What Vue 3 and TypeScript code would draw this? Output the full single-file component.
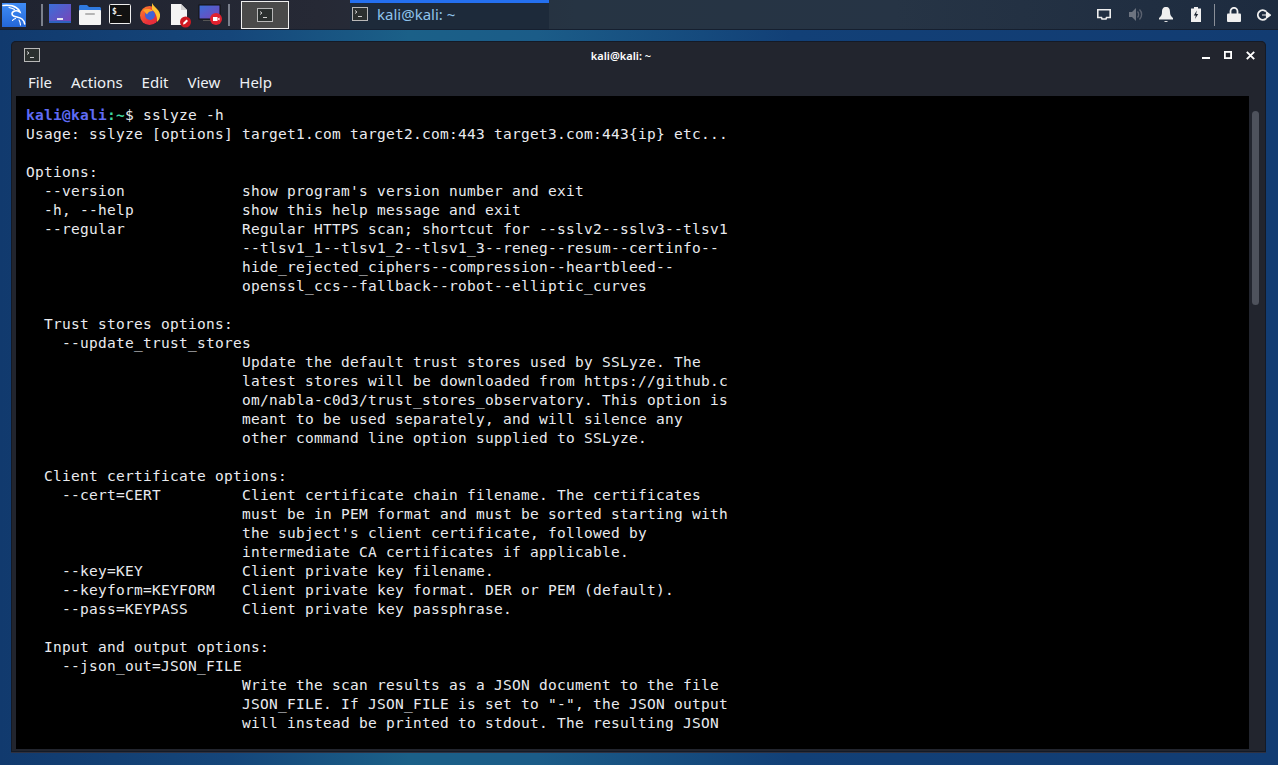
<script setup lang="ts">
type Seg = { t: string; c?: string }
const body: string[] = [
"Usage: sslyze [options] target1.com target2.com:443 target3.com:443{ip} etc...",
"",
"Options:",
"  --version             show program's version number and exit",
"  -h, --help            show this help message and exit",
"  --regular             Regular HTTPS scan; shortcut for --sslv2--sslv3--tlsv1",
"                        --tlsv1_1--tlsv1_2--tlsv1_3--reneg--resum--certinfo--",
"                        hide_rejected_ciphers--compression--heartbleed--",
"                        openssl_ccs--fallback--robot--elliptic_curves",
"",
"  Trust stores options:",
"    --update_trust_stores",
"                        Update the default trust stores used by SSLyze. The",
"                        latest stores will be downloaded from https://github.c",
"                        om/nabla-c0d3/trust_stores_observatory. This option is",
"                        meant to be used separately, and will silence any",
"                        other command line option supplied to SSLyze.",
"",
"  Client certificate options:",
"    --cert=CERT         Client certificate chain filename. The certificates",
"                        must be in PEM format and must be sorted starting with",
"                        the subject's client certificate, followed by",
"                        intermediate CA certificates if applicable.",
"    --key=KEY           Client private key filename.",
"    --keyform=KEYFORM   Client private key format. DER or PEM (default).",
"    --pass=KEYPASS      Client private key passphrase.",
"",
"  Input and output options:",
"    --json_out=JSON_FILE",
"                        Write the scan results as a JSON document to the file",
"                        JSON_FILE. If JSON_FILE is set to \"-\", the JSON output",
"                        will instead be printed to stdout. The resulting JSON",
]
const prompt: Seg[] = [
  { t: "kali@kali", c: "host" },
  { t: ":", c: "path" },
  { t: "~", c: "path" },
  { t: "$ sslyze -h" },
]
const menus = ["File", "Actions", "Edit", "View", "Help"]
</script>

<template>
  <div class="screen">
    <header class="panel">
      <div class="launchers">
        <svg class="kali" width="26" height="26" viewBox="0 0 26 26">
          <defs>
            <linearGradient id="kaliBg" x1="0" y1="0" x2="0" y2="1">
              <stop offset="0" stop-color="#3f8cf5" />
              <stop offset="1" stop-color="#2467d8" />
            </linearGradient>
          </defs>
          <rect width="24" height="24" x="1" y="1" fill="url(#kaliBg)" />
          <path d="M2 3.500c5-.5 10 0 13 2 2 1.200 3.500 2.700 4 4.500-2.500-1.500-5-1.500-6.500-.5-2 1.300-2 3.500 0 4.500 2.500 1.200 6 1 8.500 3 1.500 1.200 2.500 3 2.700 5" fill="none" stroke="#fff" stroke-width="1.600" stroke-linecap="round" />
          <path d="M8 5.500c2 .5 4 1 5.500 2M18 18c1 1.500 1.500 3 1.500 5M14.500 16.500c-1.500.5-2.500 1-3 2" fill="none" stroke="#fff" stroke-width="1.100" stroke-linecap="round" />
        </svg>
        <span class="sep first"></span>
        <svg width="24" height="20" viewBox="0 0 24 20" class="ico-desk">
          <defs>
            <linearGradient id="deskBg" x1="0" y1="0" x2="1" y2="1">
              <stop offset="0" stop-color="#3a6fd8" />
              <stop offset="1" stop-color="#7a44b8" />
            </linearGradient>
          </defs>
          <rect width="22" height="19" x="1" y="0" fill="url(#deskBg)" />
          <rect width="22" height="2" x="1" y="17" fill="#2f62c0" />
          <rect width="6" height="2" x="9" y="14" fill="#e6e6f0" />
        </svg>
        <svg width="24" height="22" viewBox="0 0 24 22" class="ico-folder">
          <path d="M1 2.500C1 1.500 1.500 1 2.500 1H9l2 2h10.500c.8 0 1.500.7 1.500 1.500V9H1z" fill="#2f7ae0" />
          <rect x="1" y="6" width="22" height="15" rx="1" fill="#f4f4f4" />
          <rect x="7" y="9" width="10" height="2" rx="1" fill="#b5b5b5" />
        </svg>
        <svg width="22" height="20" viewBox="0 0 22 20" class="ico-term">
          <rect x=".5" y=".5" width="21" height="19" rx="1" fill="#111" stroke="#eee" />
          <text x="3" y="9.500" font-family="DejaVu Sans Mono, monospace" font-size="8" font-weight="700" fill="#eee">$_</text>
        </svg>
        <svg width="22" height="22" viewBox="0 0 22 22" class="ico-fox">
          <defs>
            <linearGradient id="foxBg" x1="0" y1="0" x2="1" y2="1">
              <stop offset="0" stop-color="#ff8a2a" />
              <stop offset=".6" stop-color="#e8323a" />
              <stop offset="1" stop-color="#e0283c" />
            </linearGradient>
          </defs>
          <circle cx="10.500" cy="12.500" r="9.500" fill="url(#foxBg)" />
          <path d="M13 0c1 2 2 3 4.500 5.500C20 8 21.500 10 21 13.500c-.3 2.500-1.500 4-3 5.500.5-4.500-1-9-5-12.500z" fill="#ffc232" />
          <circle cx="11" cy="12" r="5" fill="#3f62d8" />
          <path d="M4 7c3-1.500 8-1.500 10 1-3 0-5 1-6 3.500z" fill="#ffa32a" />
        </svg>
        <svg width="22" height="26" viewBox="0 0 22 26" class="ico-doc">
          <path d="M1 1h10l6 6v15H1z" fill="#f4f4f4" />
          <path d="M11 1l6 6h-6z" fill="#d0d0d0" />
          <circle cx="15.500" cy="19" r="5.500" fill="#cf1a22" />
          <path d="M13 21.500l.5-2 3-3 1.500 1.500-3 3z" fill="#fff" />
        </svg>
        <svg width="24" height="24" viewBox="0 0 24 24" class="ico-rec">
          <rect x="1" y="1" width="21" height="14" fill="url(#deskBg)" stroke="#111" />
          <rect x="5" y="16" width="12" height="1" fill="#555" />
          <circle cx="18" cy="15" r="6" fill="#e0212f" />
          <rect x="15" y="13" width="4.500" height="4" fill="#fff" />
          <path d="M19.500 15l2-1.500v3z" fill="#fff" />
        </svg>
        <span class="sep"></span>
      </div>
      <div class="task-active-box">
        <svg width="16" height="14" viewBox="0 0 16 14"><use href="#tIcon" /></svg>
      </div>
      <div class="task-window">
        <svg width="16" height="14" viewBox="0 0 16 14">
          <g id="tIcon">
            <rect x=".5" y=".5" width="15" height="13" fill="#2b302f" stroke="#b8b8b8" />
            <path d="M3 3.500l2 1.500-2 1.500M6 9.500h4" fill="none" stroke="#cfcfcf" />
          </g>
        </svg>
        <span>kali@kali: ~</span>
      </div>
      <div class="tray">
        <svg class="t-mon" width="14" height="11" viewBox="0 0 14 11"><path d="M.8.800h12.400v7.700H9.500L9 10H5l-.5-1.500H.8z" fill="none" stroke="#eee" stroke-width="1.600" /></svg>
        <svg class="t-vol" width="14" height="15" viewBox="0 0 14 15"><path d="M0 5h3l4-4v13l-4-4H0z" fill="#6d7480" /><path d="M8.500 4.500c1.500 1.500 1.500 4.500 0 6M10.500 2.500c2.800 2.800 2.800 7.200 0 10" fill="none" stroke="#5b6270" stroke-width="1.400" /></svg>
        <svg class="t-bell" width="14" height="15" viewBox="0 0 14 15"><path d="M7 0c3 0 4 2 4 5 0 3 1 4 3 6v1.500H0V11c2-2 3-3 3-6 0-3 1-5 4-5z" fill="#f0f0f0" /><rect x="5.500" y="14" width="3" height="1" fill="#ddd" /></svg>
        <svg class="t-bat" width="10" height="15" viewBox="0 0 10 15"><path d="M3 0h4v1.500h3V15H0V1.500h3z" fill="#f0f0f0" /><path d="M5.800 3.500L2.800 8.500h2L4 12l3.200-5h-2z" fill="#1c2430" /></svg>
        <span class="tray-sep"></span>
        <svg class="t-lock" width="14" height="15" viewBox="0 0 14 15"><path d="M3.500 7V4.300a3.500 3.500 0 017 0V7" fill="none" stroke="#f0f0f0" stroke-width="1.800" /><rect x="0" y="6.500" width="14" height="8.500" rx="1" fill="#f0f0f0" /></svg>
        <svg class="t-out" width="14" height="12" viewBox="0 0 14 12"><path d="M9 2.500a4.800 4.800 0 100 7" fill="none" stroke="#f0f0f0" stroke-width="1.900" /><path d="M5 6h5M9.500 3l4 3-4 3z" fill="#f0f0f0" stroke="#f0f0f0" stroke-width="1.200" /></svg>
      </div>
    </header>

    <main class="desk">
      <section class="window">
        <div class="titlebar">
          <svg class="win-icon" width="16" height="14" viewBox="0 0 16 14"><use href="#tIcon" /></svg>
          <span class="title">kali@kali: ~</span>
          <div class="controls">
            <svg width="8" height="8" viewBox="0 0 8 8"><rect x="0" y="6" width="8" height="2" fill="#fff" /></svg>
            <svg width="8" height="8" viewBox="0 0 8 8"><rect x=".9" y=".9" width="6.200" height="6.200" fill="none" stroke="#fff" stroke-width="1.800" /></svg>
            <svg width="9" height="9" viewBox="0 0 9 9"><path d="M.8.800l7.400 7.400M8.200.800L.8 8.200" stroke="#fff" stroke-width="1.900" /></svg>
          </div>
        </div>
        <nav class="menubar">
          <span v-for="m in menus" :key="m">{{ m }}</span>
        </nav>
        <div class="term-row">
          <div class="term">
            <div class="line"><span v-for="(s, i) in prompt" :key="i" :class="s.c">{{ s.t }}</span></div>
            <div v-for="(l, i) in body" :key="i" class="line">{{ l }}</div>
          </div>
          <div class="scroll"><div class="thumb"></div></div>
        </div>
      </section>
    </main>
  </div>
</template>

<style>
html, body { margin: 0; background: #123c70; }
</style>

<style scoped>
.screen {
  width: 1278px;
  height: 765px;
  display: flex;
  flex-direction: column;
  overflow: hidden;
  background: linear-gradient(90deg, #113a6e 0%, #15467a 18%, #1b6088 32%, #1b5c88 42%, #124077 62%, #123c72 100%);
  font-family: "Noto Sans", sans-serif;
}
.panel {
  height: 29px;
  flex: none;
  display: flex;
  align-items: center;
  background: linear-gradient(90deg, #1f2330 0%, #262935 25%, #263443 45%, #263445 70%, #1d2b3f 100%);
  border-bottom: 1px solid #162030;
}
.launchers {
  display: flex;
  align-items: center;
  width: 241px;
  flex: none;
  height: 100%;
}
.launchers svg { flex: none; display: block; }
.kali { margin-left: 1px; }
.sep {
  width: 2px;
  height: 22px;
  background: #7b808c;
  flex: none;
}
.sep.first { margin-left: 14px; }
.ico-desk { margin-left: 5px; margin-top: -1px; }
.ico-folder { margin-left: 6px; }
.ico-term { margin-left: 7px; margin-top: -1px; }
.ico-fox { margin-left: 8px; margin-top: -2px; }
.ico-doc { margin-left: 9px; margin-top: 2px; }
.ico-rec { margin-left: 6px; margin-top: 3px; }
.launchers .sep:last-child { margin-left: 6px; }
.task-active-box {
  width: 46px;
  height: 26px;
  flex: none;
  border: 1px solid #f0f0f0;
  background: #4a4a4a;
  display: flex;
  align-items: center;
  justify-content: center;
}
.task-window {
  margin-left: 61px;
  width: 199px;
  height: 100%;
  box-sizing: border-box;
  flex: none;
  display: flex;
  align-items: center;
  gap: 9px;
  padding: 0 0 0 2px;
  background: #1d2a3a;
  border-top: 3px solid #2470f0;
  color: #8fc4ec;
  font-size: 15px;
  align-self: flex-start;
}
.task-window span, .task-window svg { margin-bottom: 4px; }
.tray {
  margin-left: auto;
  display: flex;
  align-items: center;
  padding-right: 7px;
}
.tray svg { display: block; flex: none; }
.t-vol { margin-left: 18px; }
.t-bell { margin-left: 16px; margin-top: -1px; }
.t-bat { margin-left: 18px; }
.t-lock { margin-left: 12px; }
.t-out { margin-left: 16px; }
.t-mon { margin-top: -1px; }
.tray-sep {
  width: 1.500px;
  height: 22px;
  background: #8a8f98;
  margin-left: 13px;
}
.desk {
  flex: 1;
  padding: 11px 12px 12px 11px;
  display: flex;
  min-height: 0;
}
.window {
  flex: 1;
  display: flex;
  flex-direction: column;
  border-radius: 5px 5px 0 0;
  background: #22252e;
  box-shadow: inset 0 0 0 1px #141a26;
  min-width: 0;
  padding-bottom: 3px;
  border-bottom: 1px solid #2f3140;
}
.titlebar {
  height: 28px;
  flex: none;
  position: relative;
  display: flex;
  align-items: center;
  justify-content: center;
  padding-right: 35px;
  box-sizing: border-box;
  color: #fff;
}
.win-icon { position: absolute; left: 13px; top: 7px; }
.title {
  font-size: 11px;
  font-weight: 600;
}
.controls {
  position: absolute;
  right: 11px;
  top: 10px;
  display: flex;
  align-items: flex-start;
  gap: 14px;
}
.controls svg { display: block; }
.menubar {
  height: 27px;
  flex: none;
  display: flex;
  align-items: center;
  gap: 19px;
  padding: 0 0 2px 17px;
  box-sizing: border-box;
  color: #eef1f5;
  font-size: 15px;
}
.term-row {
  flex: 1;
  display: flex;
  min-height: 0;
  margin-left: 5px;
}
.term {
  flex: 1;
  background: #000;
  color: #e9ebef;
  padding: 10px 0 0 10px;
  font-family: "DejaVu Sans Mono", monospace;
  font-size: 14.500px;
  letter-spacing: .27px;
  overflow: hidden;
  min-width: 0;
}
.line {
  height: 19px;
  line-height: 19px;
  white-space: pre;
}
.host { color: #5f6cf5; font-weight: 700; }
.path { color: #3fd6a0; font-weight: 700; }
.scroll {
  width: 17px;
  flex: none;
  position: relative;
}
.thumb {
  position: absolute;
  left: 3px;
  top: 15px;
  width: 7px;
  height: 194px;
  border-radius: 4px;
  background: #4e525c;
}
</style>
